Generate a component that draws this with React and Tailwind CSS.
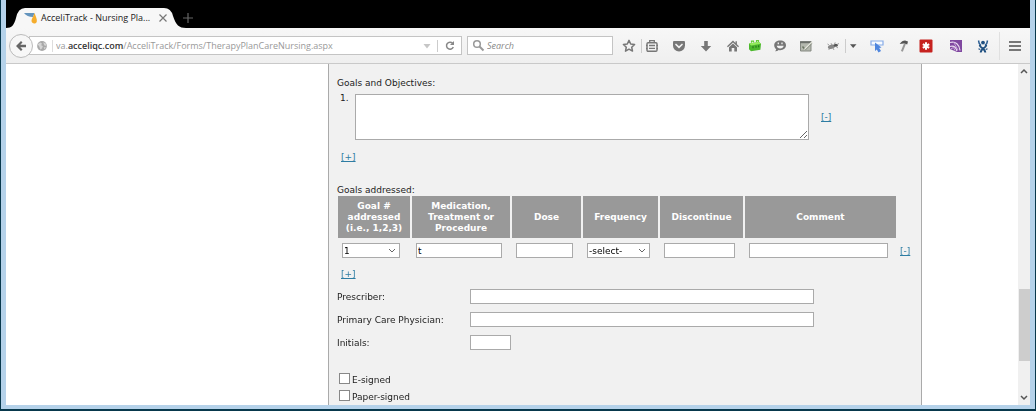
import React, { useState } from "react";

const svgBase = "block h-3.5 w-3.5 shrink-0";

function Icon({ children, className = "" }) {
  return (
    <svg viewBox="0 0 14 14" className={`${svgBase} ${className}`} fill="none" aria-hidden="true">
      {children}
    </svg>
  );
}

const tools = [
  {
    label: "Bookmark this page",
    gap: "ml-[9px]",
    art: <path d="M7 1.4l1.7 3.6 3.9.5-2.9 2.7.8 3.9L7 10.2l-3.5 1.900.8-3.900L1.400 5.500l3.900-.5z" stroke="#777" strokeWidth="1.500" strokeLinejoin="round" />,
  },
  { separator: true, gap: "ml-[5px]" },
  {
    label: "Bookmarks",
    gap: "ml-[3px]",
    art: (
      <>
        <rect x="2" y="3.7" width="10" height="8.6" rx="1" stroke="#777" strokeWidth="1.4" />
        <path d="M4.7 3.5V1.7h4.6v1.8M1 6.5h1.5M11.5 6.5H13M1 9.5h1.5M11.5 9.5H13M4 6.5h6M4 9.3h6" stroke="#777" strokeWidth="1.3" />
      </>
    ),
  },
  {
    label: "Pocket",
    gap: "ml-[13px]",
    art: (
      <>
        <path d="M1 3.3C1 2.5 1.5 2 2.3 2h9.4c.8 0 1.3.5 1.3 1.3v3.2a6 6 0 0 1-12 0z" fill="#777" />
        <path d="M4 5.5l3 2.9 3-2.9" stroke="#f3f3f3" strokeWidth="1.7" strokeLinecap="round" />
      </>
    ),
  },
  { label: "Downloads", gap: "ml-[13px]", art: <path d="M5.2 2h3.6v5.1h3.4L7 12.6 1.8 7.1h3.4z" fill="#777" /> },
  {
    label: "Home",
    gap: "ml-[13px]",
    art: <path d="M7 1.5l2.5 2.4V2.3h1.4v2.9L13 7.3l-.9.9L7 3.4 1.9 8.2 1 7.3zM3 8.2l4-3.8 4 3.8v4.3H8.3V9H5.7v3.5H3z" fill="#777" />,
  },
  {
    label: "Green toolbar add-on",
    gap: "ml-2",
    art: (
      <>
        <path d="M1 4.500l10-1.500 2 1.700-.6 6-9.400 1.500-2-2z" fill="#4cb82d" />
        <path d="M1 4.500l10-1.500 2 1.700-9.800 1.800z" fill="#93ea5c" />
        <path d="M3.500 3.800V2.200h2v1.400M8.500 3V1.600h2V3" stroke="#66cb3a" strokeWidth="1.200" />
        <path d="M5 7.200v2M8 6.700v2M10.700 6.300v2" stroke="#1f6a18" />
      </>
    ),
  },
  {
    label: "Chat",
    gap: "ml-[11px]",
    art: (
      <>
        <path d="M7.2 1.5c3.4 0 5.8 2 5.8 4.8s-2.4 4.9-5.8 4.9c-.5 0-1-.1-1.5-.2-1 .9-2.3 1.3-3.7 1.2.8-.6 1.2-1.2 1.2-2C2 9.3 1.2 8 1.2 6.3c0-2.8 2.6-4.8 6-4.8z" fill="#777" />
        <path d="M3.7 6.8h7c-.4 1.7-1.6 2.6-3.5 2.6s-3.1-.9-3.5-2.6z" fill="#f3f3f3" />
        <path d="M5.3 3.5v1.7M9 3.5v1.7" stroke="#f3f3f3" strokeWidth="1.3" />
      </>
    ),
  },
  {
    label: "Notes",
    gap: "ml-3",
    art: (
      <>
        <path d="M1.5 3H12v9H1.500z" fill="#b4b8ae" stroke="#858982" />
        <path d="M1 2.200h11.500v2H1z" fill="#6b6f6a" />
        <path d="M3.500 7.500l2.200 2.500" stroke="#6a7562" strokeWidth="1.500" />
        <path d="M5.500 10.500L13 3" stroke="#e3e4da" strokeWidth="1.600" />
        <path d="M6.300 11L12.800 4.500" stroke="#727a6b" strokeWidth=".8" />
      </>
    ),
  },
  {
    label: "Firebug",
    gap: "ml-[13px]",
    art: (
      <>
        <ellipse cx="5.500" cy="7.800" rx="3.700" ry="2" transform="rotate(-15 5.500 7.800)" fill="#888" />
        <ellipse cx="9.800" cy="6.300" rx="2" ry="1.500" fill="#555" />
        <path d="M3 6L1.500 5M6 6L5 4.200M8.500 5l.7-1.600M4 9.500L2.500 11M7 9l1 2M10 7.500l2 1.500M11 5.500l2-1" stroke="#888" strokeWidth=".8" />
      </>
    ),
  },
  { separator: true, gap: "ml-[5px]" },
  { label: "More add-on options", gap: "ml-0", art: <path d="M4 5.300h6.500L7.200 9z" fill="#555" /> },
  {
    label: "Inspect element",
    gap: "ml-2.5",
    art: (
      <>
        <path d="M1 2h12v4H1z" fill="#f8fbff" stroke="#86abe8" strokeWidth="1.200" />
        <path d="M5 3.500l6.500 5-2.300.6L11 12l-2.500 1.500-1.700-3L5 12z" fill="#4f86de" />
      </>
    ),
  },
  {
    label: "Build tools",
    gap: "ml-3",
    art: (
      <>
        <path d="M8 4.500l1.800.7-3 7.600-1.900-.8z" fill="#999" />
        <path d="M3.700 5C5.500 2.300 8 1.300 9.700 1.700l2.300.7-.8 3-2-.6c-1.700-.6-3.500 0-5.500.2z" fill="#555" />
      </>
    ),
  },
  {
    label: "LastPass",
    gap: "ml-[9px]",
    art: (
      <>
        <rect x=".5" y=".5" width="13" height="13" rx="1" fill="#c6221f" />
        <path d="M7 3.300v7.400M3.800 5.100l6.400 3.800M3.800 8.900l6.400-3.800" stroke="#fff" strokeWidth="2.100" />
      </>
    ),
  },
  {
    label: "Purple add-on",
    gap: "ml-4",
    art: (
      <>
        <path d="M1 1h12v12H8L1 10z" fill="#8048a0" />
        <path d="M1 3.500c5.500-1.500 9.500 2 10 8" stroke="#e9daf0" strokeWidth="1.200" />
        <path d="M1 7.500c3.500-1 6 1 7 4.500" stroke="#e9daf0" strokeWidth="1.200" />
        <path d="M4.500 3l4.500 8M1.500 10l3-1.500 1.500 3" stroke="#c39dd6" />
      </>
    ),
  },
  {
    label: "JIRA",
    gap: "ml-[13px]",
    art: (
      <>
        <circle cx="7" cy="3.600" r="1.900" fill="#205081" />
        <path d="M2.500 1.500l.7 3L5 6.500M11.500 1.500l-.7 3L9 6.500" stroke="#2b5d92" strokeWidth="1.500" />
        <path d="M10.300 6c.2 2.800-5.600 3.200-5.600 7.500M3.700 6c-.2 2.800 5.600 3.200 5.600 7.500" stroke="#205081" strokeWidth="1.900" />
        <path d="M2.500 9.700l1.800.8M11.500 9.700l-1.800.8" stroke="#205081" strokeWidth="1.200" />
      </>
    ),
  },
];

function Toolbar() {
  const [search, setSearch] = useState("");
  return (
    <div className="flex h-9 shrink-0 items-center border-b border-[#c9c9c9] bg-linear-to-b from-[#f7f7f7] to-[#efefef] pl-[3px] pr-2">
      <button type="button" aria-label="Back" className="z-10 flex size-6 shrink-0 items-center justify-center rounded-full border border-[#bbb] bg-[#f7f7f7]">
        <Icon><path d="M7 2L2 7l5 5 1.500-1.500L6.300 8.200H12V5.800H6.300l2.200-2.300z" fill="#666" /></Icon>
      </button>
      <div className="-ml-1 flex h-[19px] min-w-0 flex-1 items-center border border-[#c4c4c4] bg-white pl-1.5">
        <svg viewBox="0 0 14 14" className="size-3 shrink-0" aria-hidden="true">
          <circle cx="7" cy="7" r="5.700" fill="#a9a9a9" />
          <path d="M2 5l3-2 2 1-1 2 2 1-1 3-2 1-1-3zM8.500 2.500l3 1.500.5 3-2.500-1zM9 8.500h2.500L10 11z" fill="#d5d5d5" />
        </svg>
        <span className="ml-1 h-3 w-px shrink-0 bg-[#ddd]" />
        <span className="ml-[3px] min-w-0 flex-1 truncate font-['Open_Sans',sans-serif] text-[9px] leading-4 text-[#999]">
          va.<span className="font-semibold text-[#333]">acceliqc.com</span>/AcceliTrack/Forms/TherapyPlanCareNursing.aspx
        </span>
        <button type="button" aria-label="Show history" className="mr-[3px]"><Icon><path d="M3.500 5h7L7 9.500z" fill="#c6c6c6" /></Icon></button>
        <span className="h-3 w-px shrink-0 bg-[#ccc]" />
        <button type="button" aria-label="Reload" className="ml-[5px] mr-1">
          <Icon>
            <path d="M9.600 4.300A3.500 3.500 0 1 0 10.300 8" stroke="#888" strokeWidth="1.500" />
            <path d="M11 2v4H7z" fill="#888" />
          </Icon>
        </button>
      </div>
      <label className="ml-[5px] flex h-[19px] w-[146px] shrink-0 items-center border border-[#c4c4c4] bg-white pl-1">
        <Icon className="mr-px">
          <circle cx="5" cy="5" r="3.300" stroke="#999" strokeWidth="1.500" />
          <path d="M7.500 7.500l4 4" stroke="#999" strokeWidth="1.900" />
        </Icon>
        <input
          aria-label="Search"
          placeholder="Search"
          value={search}
          onChange={(e) => setSearch(e.target.value)}
          className="w-full min-w-0 bg-transparent font-['Open_Sans',sans-serif] text-[9px] leading-4 text-[#333] outline-none placeholder:italic placeholder:text-[#888]"
        />
      </label>
      {tools.map((t, i) =>
        t.separator ? (
          <span key={i} className={`h-3.5 w-px shrink-0 bg-[#ccc] ${t.gap}`} />
        ) : (
          <button key={i} type="button" aria-label={t.label} className={`shrink-0 ${t.gap}`}><Icon>{t.art}</Icon></button>
        )
      )}
      <span className="ml-[9px] h-7 w-px shrink-0 bg-[#e0e0e0]" />
      <button type="button" aria-label="Open menu" className="ml-2">
        <Icon><path d="M1 3h12M1 7h12M1 11h12" stroke="#777" strokeWidth="1.800" /></Icon>
      </button>
    </div>
  );
}

const box = "h-[15px] border border-[#aaa] bg-white px-px text-[9px] leading-3 text-black outline-none";
const link = "text-[#2e7da3] underline";

function SelectBox({ label, options }) {
  return (
    <div className="relative">
      <select aria-label={label} className={`${box} block w-full appearance-none`}>
        {options.map((o) => <option key={o}>{o}</option>)}
      </select>
      <svg viewBox="0 0 8 6" className="pointer-events-none absolute right-1 top-[5px] h-1.5 w-2" fill="none" aria-hidden="true">
        <path d="M1 1l3 3 3-3" stroke="#666" />
      </svg>
    </div>
  );
}

const columns = [
  { name: "Goal # addressed (i.e., 1,2,3)", width: "w-[72px]", pad: "pr-2.5" },
  { name: "Medication, Treatment or Procedure", width: "w-[98px]", pad: "pr-2" },
  { name: "Dose", width: "w-[69px]", pad: "pr-2" },
  { name: "Frequency", width: "w-[75px]", pad: "pr-2" },
  { name: "Discontinue", width: "w-[83px]", pad: "pr-2" },
  { name: "Comment", width: "w-[151px]", pad: "pr-2" },
];

const fields = [
  { id: "prescriber", label: "Prescriber:", width: "w-[344px]" },
  { id: "physician", label: "Primary Care Physician:", width: "w-[344px]" },
  { id: "initials", label: "Initials:", width: "w-[41px]" },
];

function PlanForm() {
  return (
    <form className="w-[594px] shrink-0 border-x border-[#aaa] bg-[#f1f1f1] pl-2 pt-[13px] font-['DejaVu_Sans',sans-serif] text-[9px] leading-3 text-[#222]" onSubmit={(e) => e.preventDefault()}>
      <label htmlFor="goal-1" className="block">Goals and Objectives:</label>
      <div className="mt-[5px] flex pl-[3px]">
        <span className="w-[15px] leading-2">1.</span>
        <textarea id="goal-1" className="block h-[46px] w-[454px] resize border border-[#aaa] bg-white outline-none" />
        <a href="#remove-goal" className={`${link} ml-3 self-center`}>[-]</a>
      </div>
      <div className="mt-[11px] pl-1"><a href="#add-goal" className={link}>[+]</a></div>
      <div className="mt-[21px]">Goals addressed:</div>
      <table className="-ml-px table-fixed border-separate border-spacing-x-0.5 border-spacing-y-0">
        <thead>
          <tr>
            {columns.map((c) => (
              <th key={c.name} className={`${c.width} h-[42px] bg-[#999] px-1 text-center align-middle text-[9px] font-bold leading-[11px] text-white`}>{c.name}</th>
            ))}
            <td className="w-5" />
          </tr>
        </thead>
        <tbody>
          <tr>
            {columns.map((c, i) => (
              <td key={c.name} className={`pl-1 pt-[5px] ${c.pad}`}>
                {i === 0 ? (
                  <SelectBox label={c.name} options={["1", "2", "3"]} />
                ) : i === 3 ? (
                  <SelectBox label={c.name} options={["-select-", "Daily", "Weekly"]} />
                ) : (
                  <input aria-label={c.name} defaultValue={i === 1 ? "t" : ""} autoFocus={i === 1} className={`${box} block w-full`} />
                )}
              </td>
            ))}
            <td className="pl-0.5 pt-1.5"><a href="#remove-entry" className={link}>[-]</a></td>
          </tr>
        </tbody>
      </table>
      <div className="mt-2.5 pl-1"><a href="#add-entry" className={link}>[+]</a></div>
      <div className="mt-[9px] flex flex-col gap-2">
        {fields.map((f) => (
          <div key={f.id} className="flex items-center">
            <label htmlFor={f.id} className="w-[133px]">{f.label}</label>
            <input id={f.id} className={`${box} ${f.width}`} />
          </div>
        ))}
      </div>
      <div className="mt-[22px] flex flex-col gap-[5px] pl-0.5">
        {["E-signed", "Paper-signed"].map((name) => (
          <label key={name} className="flex h-3 items-center gap-0.5">
            <input type="checkbox" className="size-[11px] appearance-none border border-[#888] bg-white checked:bg-[#555]" />
            <span className="pt-1">{name}</span>
          </label>
        ))}
      </div>
    </form>
  );
}

export default function App() {
  return (
    <div className="flex h-screen flex-col overflow-hidden border-x border-b-2 border-[#08384c] bg-[#b5d2ea] pb-1 pl-[5px] pr-[5px]">
      <header className="flex h-7 shrink-0 items-end bg-black">
        <div className="relative flex h-5 w-[180px] items-center pl-[18px] pr-[14px]">
          <svg viewBox="0 0 180 20" preserveAspectRatio="none" className="absolute inset-0 h-full w-full" aria-hidden="true">
            <path d="M0 20C6 20 8 17 10 10Q12 0 19 0H158Q165 0 167 8C170 17 173 20 180 20Z" fill="#f7f7f7" />
          </svg>
          <Icon className="relative">
            <path d="M0 2h10.500L9 6C5 6 2 4.500 0 2z" fill="#6494bd" />
            <path d="M10.500 2c1 3 2.800 6 2.300 8.500-.6 3-5.100 2.500-5.300-.4C7.400 7.500 9.500 5.500 10.500 2z" fill="#f5ad2d" />
          </Icon>
          <span className="relative ml-[3px] flex-1 whitespace-nowrap font-['Open_Sans',sans-serif] text-[9px] leading-4 text-[#222]">AcceliTrack - Nursing Pla...</span>
          <button type="button" aria-label="Close tab" className="relative mr-1">
            <svg viewBox="0 0 10 10" className="size-2.5" aria-hidden="true"><path d="M1.500 1.500l7 7M8.500 1.500l-7 7" stroke="#777" strokeWidth="1.200" /></svg>
          </button>
        </div>
        <button type="button" aria-label="New tab" className="-ml-[3px] mb-[5px]">
          <svg viewBox="0 0 10 10" className="size-2.5" aria-hidden="true"><path d="M5 0v10M0 5h10" stroke="#666" strokeWidth="1.200" /></svg>
        </button>
      </header>
      <Toolbar />
      <main className="flex min-h-0 flex-1 bg-white">
        <div className="flex min-w-0 flex-1 overflow-hidden">
          <div className="flex-[322]" />
          <PlanForm />
          <div className="flex-[96]" />
        </div>
        <div className="flex w-3 shrink-0 flex-col items-center bg-[#f0f0f0] py-1" aria-hidden="true">
          <svg viewBox="0 0 8 6" className="h-1.5 w-2" fill="none"><path d="M1 5l3-3 3 3" stroke="#555" strokeWidth="1.500" /></svg>
          <div className="flex-[215]" />
          <div className="w-[11px] flex-[72] bg-[#cdcdcd]" />
          <div className="flex-[34]" />
          <svg viewBox="0 0 8 6" className="h-1.5 w-2" fill="none"><path d="M1 1l3 3 3-3" stroke="#555" strokeWidth="1.500" /></svg>
        </div>
      </main>
    </div>
  );
}
